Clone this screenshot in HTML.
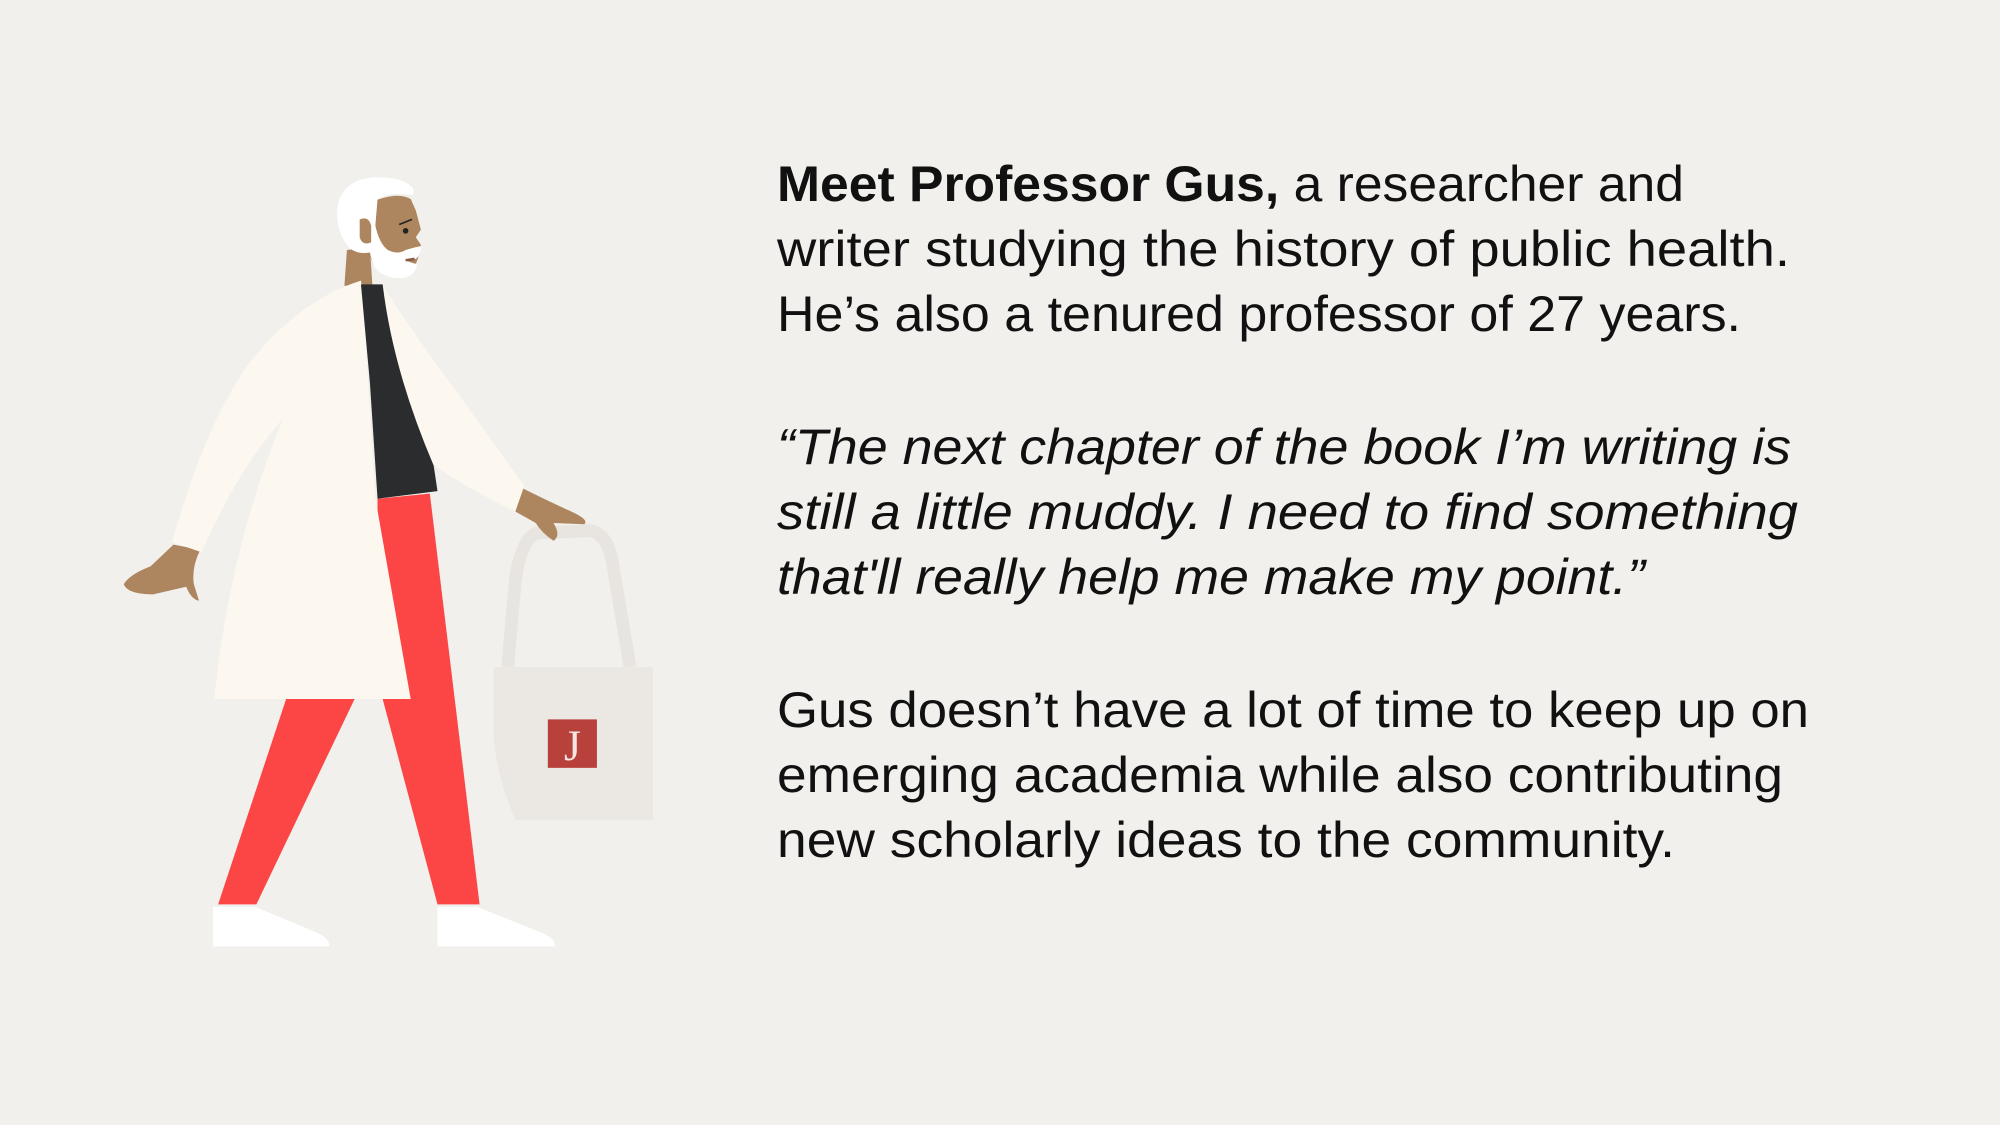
<!DOCTYPE html>
<html><head><meta charset="utf-8"><style>
html,body{margin:0;padding:0;background:#f1f0ec;}
svg{display:block}
text{font-family:"Liberation Sans",sans-serif;font-size:50px;fill:#111;}
</style></head><body>
<svg width="2000" height="1125" viewBox="0 0 2000 1125" xmlns="http://www.w3.org/2000/svg">
<rect width="2000" height="1125" fill="#f1f0ec"/>
<g transform="scale(1.2755)">
  <path d="M398,523 L404,455 Q408,425 420,418 L462,416 Q476,418 480,440 L494,523" fill="none" stroke="#e8e5e0" stroke-width="10"/>
  <path d="M387,523 L512,523 L512,643 L404,643 Q390,610 387,580 Z" fill="#ebe8e3"/>
  <rect x="429.5" y="564" width="38.5" height="38" fill="#b8413c"/>
  <text x="448.8" y="596" text-anchor="middle" style="font-family:'Liberation Serif',serif;font-size:34px;fill:#f3e6e2">J</text>
  <path d="M296,391 L337,387 L376,709 L343,709 L300,548 L278,548 L201,709 L171,709 L225,546 L296,546 Z" fill="#fc4646"/>
  <path d="M167,711 L200,711 L248,731 Q259,736 258,742 L167,742 Z" fill="#fff"/>
  <path d="M343,711 L374,711 L424,731 Q436,736 435,742 L343,742 Z" fill="#fff"/>
  <path d="M272,196 L290,194 L292,224 L270,224 Z" fill="#ad8660"/>
  <path d="M136,427 L157,431 Q150,445 152,458 L156,471 Q150,470 146,460 L120,466 Q100,466 97,458 Q102,450 118,444 Z" fill="#ad8660"/>
  <path d="M410,383 Q430,393 450,402 Q462,408 458,411 L434,410 Q440,420 434,424 Q425,418 420,410 L404,401 Z" fill="#ad8660"/>
  <path d="M283,220 Q235,235 195,285 Q160,335 135,425 L158,433 Q185,370 222,328 Q180,430 168,548 L322,548 L294,389 L284,226 Z" fill="#fcf8f0"/>
  <path d="M300,224 Q330,270 360,310 Q385,345 411,381 L404,401 Q370,385 339,364 L300,260 Z" fill="#fcf8f0"/>
  <path d="M283,223 L300,223 Q308,290 340,365 L343,385 L296,391 L290,300 Z" fill="#2b2c2e"/>
  <!-- face -->
  <path d="M292,158 Q312,150 322,156 L326,165 L330,180 L326,186 L330,192 Q328,206 322,214 L296,212 Q286,200 288,172 Z" fill="#ad8660"/>
  <!-- hair -->
  <path d="M265,160 Q270,140 295,139 Q318,139 324,148 L324,153 Q305,150 296,156 L294,180 L290,198 Q278,200 272,192 Q262,178 265,160 Z" fill="#ffffff"/>
  <!-- beard -->
  <path d="M293,170 Q296,190 304,196 Q312,200 318,196 Q324,194 330,193 Q330,200 326,203 Q322,204 318,204 Q322,206 327,207 Q326,216 316,218 Q302,219 294,210 Q288,198 289,180 Z" fill="#ffffff"/>
  <path d="M282,172 Q289,169 291,177 L291,190 Q284,193 282,186 Z" fill="#ad8660"/>
  <ellipse cx="318" cy="181" rx="2.2" ry="2.2" fill="#222"/>
  <path d="M313,176 L323,172" stroke="#222" stroke-width="1.2"/>
  <path d="M318,204 L325,203" stroke="#8a5a44" stroke-width="2"/>
</g>
<g>
  <text x="777" y="201" textLength="907" lengthAdjust="spacingAndGlyphs"><tspan font-weight="bold">Meet Professor Gus,</tspan> a researcher and</text>
  <text x="777" y="266" textLength="1013" lengthAdjust="spacingAndGlyphs">writer studying the history of public health.</text>
  <text x="777" y="331" textLength="964" lengthAdjust="spacingAndGlyphs">He’s also a tenured professor of 27 years.</text>
  <text x="777" y="464" font-style="italic" textLength="1014" lengthAdjust="spacingAndGlyphs">“The next chapter of the book I’m writing is</text>
  <text x="777" y="529" font-style="italic" textLength="1021" lengthAdjust="spacingAndGlyphs">still a little muddy. I need to find something</text>
  <text x="777" y="594" font-style="italic" textLength="868" lengthAdjust="spacingAndGlyphs">that'll really help me make my point.”</text>
  <text x="777" y="727" textLength="1032" lengthAdjust="spacingAndGlyphs">Gus doesn’t have a lot of time to keep up on</text>
  <text x="777" y="792" textLength="1006" lengthAdjust="spacingAndGlyphs">emerging academia while also contributing</text>
  <text x="777" y="857" textLength="898" lengthAdjust="spacingAndGlyphs">new scholarly ideas to the community.</text>
</g>
</svg>
</body></html>
